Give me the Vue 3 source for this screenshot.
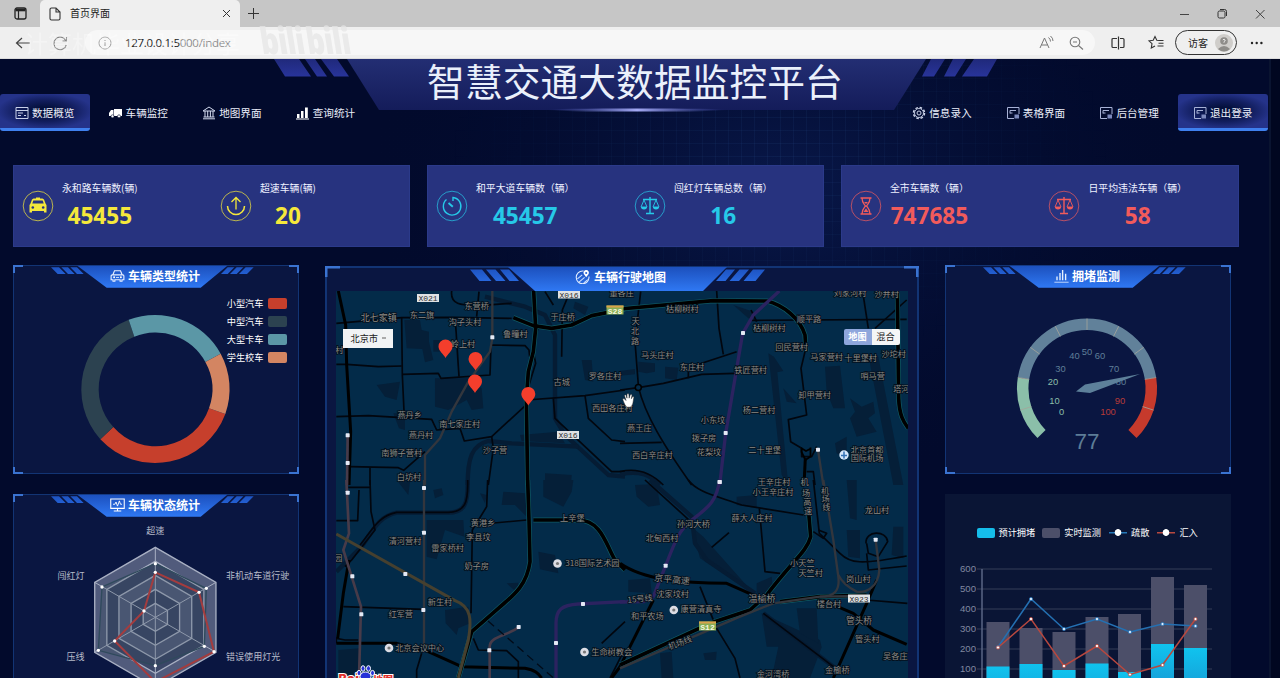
<script setup>
const glyph = {
  list: '<path d="M1 1.500h12v11H1zM1 4.500h12M3 7h5M3 9.500h3M9 9.500h2" fill="none" stroke="#c9d1ea" stroke-width="1"/>',
  truck: '<path d="M5 3h8v7H5zM0 7l2-3h2.500v6H0z" fill="#fff"/><circle cx="3.500" cy="10.300" r="1.500" fill="#fff" stroke="#020b2e" stroke-width=".6"/><circle cx="10" cy="10.300" r="1.500" fill="#fff" stroke="#020b2e" stroke-width=".6"/>',
  bank: '<path d="M1 5L7 1l6 4zM3 5v6M5.700 5v6M8.400 5v6M11 5v6M1.500 11h11M1 12.800h12" fill="none" stroke="#d3daee" stroke-width="1"/>',
  bars: '<path d="M1 8h2.500v4H1zM5 5h2.500v7H5zM9 1.500h2.800V12H9zM0 12.500h13v1H0z" fill="#fff"/>',
  gear: '<circle cx="7" cy="7" r="5.500" fill="none" stroke="#cdd5ea" stroke-width="1.500" stroke-dasharray="2.500 1.820"/><circle cx="7" cy="7" r="4.500" fill="none" stroke="#cdd5ea" stroke-width=".9"/><circle cx="7" cy="7" r="2" fill="none" stroke="#cdd5ea"/>',
  form: '<path d="M13 8V1.500H1.500v11H8M4 7.500V4.500H10M4 7H6.500" fill="none" stroke="#a7b1d6" stroke-width="1"/><path d="M8.500 8.500H13v4H8.500z" fill="#7c89bd"/>',
  car: '<path d="M4 7l2-5h8l2 5M3 7.500h14a1.500 1.500 0 0 1 1.500 1.500v5H16v2h-2.500v-2h-7v2H4v-2H1.500V9A1.500 1.500 0 0 1 3 7.500z" fill="none" stroke="#e8f0ff" stroke-width="1.500"/><circle cx="5.500" cy="10.700" r="1.300" fill="#fff"/><circle cx="14.500" cy="10.700" r="1.300" fill="#fff"/><path d="M8 11h4" stroke="#fff"/>',
  monitor: '<path d="M1 1h18v12.500H1zM10 13.500v3M5 17h10" fill="none" stroke="#fff" stroke-width="1.400"/><path d="M4 8h2.500l1.500-3 2 5.500 2.500-7L14 8h2" fill="none" stroke="#fff" stroke-width="1.200"/>',
  route: '<circle cx="9.500" cy="10" r="8" fill="none" stroke="#e4efff" stroke-width="1.300" stroke-dasharray="38 10"/><path d="M14 10l-3-4a3.400 3.400 0 1 1 6 0z" fill="#fff"/><circle cx="14" cy="4.700" r="1.300" fill="#2563d8"/><path d="M3 12l6-5M5 16l7-6M11 17l5-4" stroke="#cfe1ff" stroke-width="1.300"/>',
  graph: '<path d="M.500 17.300h19" stroke="#cfe0ff" stroke-width="1.200"/><path d="M4 14.500V9.500M8 14.500V5M11.500 14.500V1M15.500 14.500V6" stroke="#e8f2ff" stroke-width="1.800" fill="none"/>',
  taxi: '<path d="M13 6.500h4v1.200h-4zM9 8.500L10.500 7.500h9L21 8.500l1.500 4 1 1.500v7.500h-2.500V20H9v1.500H6.500V14l1-1.500z" fill="currentColor"/><path d="M10.300 9.500h9.400l1 3H9.300z" fill="#27337f"/><circle cx="9.800" cy="16.500" r="1.300" fill="#27337f"/><circle cx="20.200" cy="16.500" r="1.300" fill="#27337f"/>',
  upload: '<path d="M15 18.500V7M10.500 11L15 6.500 19.500 11" fill="none" stroke="currentColor" stroke-width="1.300"/><path d="M6.500 15a8.500 8.500 0 0 0 17 0" fill="none" stroke="currentColor" stroke-width="1.500"/>',
  timer: '<path d="M16 10V6.500a8.800 8.800 0 1 1-6.500 2" fill="none" stroke="currentColor" stroke-width="1.400"/><path d="M11.500 12l4.300 3.700" stroke="currentColor" stroke-width="1.900"/>',
  scale: '<path d="M15 6v16M11 22.500h8M8 8.500h14" fill="none" stroke="currentColor" stroke-width="1.400"/><path d="M6 16l3-7 3 7zM18 16l3-7 3 7z" fill="none" stroke="currentColor" stroke-width=".9"/><path d="M6 16a3 2.400 0 0 0 6 0zM18 16a3 2.400 0 0 0 6 0z" fill="currentColor"/>',
  hourglass: '<path d="M9.500 7h11M9.500 23h11M11 7c0 5 2 6 3.500 8-1.500 2-3.500 3-3.500 8M19 7c0 5-2 6-3.500 8 1.500 2 3.500 3 3.500 8" fill="none" stroke="currentColor" stroke-width="1.300"/><path d="M12.500 21l2.500-3.500 2.500 3.500zM13 11h4l-2 2z" fill="currentColor"/>'
}
const navLeft = [['list', '数据概览', true], ['truck', '车辆监控'], ['bank', '地图界面'], ['bars', '查询统计']]
const navRight = [['gear', '信息录入'], ['form', '表格界面'], ['form', '后台管理'], ['form', '退出登录', true]]
const stats = [
  { tone: 'yellow', items: [['taxi', '永和路车辆数(辆)', '45455'], ['upload', '超速车辆(辆)', '20']] },
  { tone: 'cyan', items: [['timer', '和平大道车辆数（辆）', '45457'], ['scale', '闯红灯车辆总数（辆）', '16']] },
  { tone: 'red', items: [['hourglass', '全市车辆数（辆）', '747685'], ['scale', '日平均违法车辆（辆）', '58']] }
]
const donutLegend = [['小型汽车', 'c1'], ['中型汽车', 'c2'], ['大型卡车', 'c3'], ['学生校车', 'c4']]

const hex = (r) => [0, 1, 2, 3, 4, 5].map(i => {
  const a = Math.PI / 3 * i - Math.PI / 2
  return `${466 + r * Math.cos(a)},${412 + r * Math.sin(a)}`
}).join(' ')
const rings = [210, 168, 126, 84, 42]

const polar = (v, r) => {
  const a = (225 - 2.7 * v) * Math.PI / 180
  return [1087 + r * Math.cos(a), 388.5 - r * Math.sin(a)]
}
const arc = (a, b) => {
  const [x1, y1] = polar(a, 64.300), [x2, y2] = polar(b, 64.300)
  return `M${x1},${y1}A64.3,64.3 0 ${b - a > 66 ? 1 : 0} 1 ${x2},${y2}`
}
const ticks = [10, 20, 30, 40, 50, 60, 70, 80, 90].map(v => [...polar(v, 58.500), ...polar(v, 70)])
const gaugeNums = [[0, 1061.500, 411.500], [10, 1054.500, 400], [20, 1053, 381.500], [30, 1060.500, 368], [40, 1074.500, 355.500], [50, 1087, 351.500], [60, 1100, 355.500], [70, 1114, 368], [80, 1121, 381.500], [90, 1120, 400], [100, 1108, 411.500]]

const bars = [[998, 622, 666.500], [1031, 628, 664], [1064, 632, 670], [1097, 617, 663.500], [1129.500, 614, 672], [1162.500, 577, 644], [1195.500, 585, 648]]
const blueLine = [[998, 647], [1031, 599], [1064, 629], [1097, 619], [1130, 632], [1162.500, 624], [1195.500, 626]]
const redLine = [[998, 647.500], [1031, 619], [1064, 666], [1097, 646], [1130, 674.500], [1162.500, 665], [1195.500, 619]]
const pts = (l) => l.map(p => p.join(',')).join(' ')

const tiles = [
  {
    x: 325, y: 285,
    blocks: ['238,105 285,105 290,135 312,140 312,170 325,225 300,232 292,192 245,190', '325,165 365,165 365,200 325,200', '330,280 430,280 470,310 475,370 440,375 425,345 370,375 330,365', '770,225 800,225 805,290 780,285', '750,50 790,65 780,90 745,70', '660,565 740,570 738,600 660,600', '585,450 700,440 720,475 590,468', '205,385 240,385 240,435 222,430', '155,300 225,290 215,345 180,335'],
    rivers: ['M480,35 L600,65 L660,90 L690,150 L690,400 L720,450 L850,570 L900,575', 'M428,600 C428,520 440,480 490,468 L560,475 L760,485'],
    roads: ['M34,115 L230,98 L380,97 L560,100', 'M230,98 L232,270 L238,400', 'M34,238 L65,238 L160,245 L230,243', 'M392,120 L402,275', 'M232,268 L340,265 L348,280 L495,270 L498,180 L600,182 L612,195 L614,215', 'M710,215 L712,75 L735,20', 'M34,395 L130,392 L320,403 L335,435 L405,430 L418,468 L500,455 L605,358', 'M605,345 L780,332 L900,315', 'M780,332 L790,400 L860,465 L900,470', 'M500,455 L505,490 L490,600', 'M75,545 L220,548 L236,556 L300,500', 'M135,548 V600', 'M640,120 L625,200 L632,235 L612,300', 'M380,18 C375,60 410,60 460,62 L560,55', 'M462,20 L455,95', 'M685,60 L660,20 M685,340 L690,400 L860,560 L900,560'],
    highways: ['M40,18 L62,120 L65,240 L77,440 L72,600'],
    express: ['M626,18 L632,130 L625,200 L610,260 L604,340 L608,600', 'M565,98 L625,122 L680,130 L740,120 L800,92 L900,72'],
    gray: ['M502,18 L502,160 L495,200 L430,290 L380,380 L345,460 L300,510 L300,600'], mauve: ['M68,450 L66,600'], purple: [], brown: [],
    stops: [[502, 157], [68, 451], [68, 534]],
    labels: [['北七家镇', 161, 99, 27], ['东二旗', 291, 90], ['东营桥', 455, 62], ['沟子头村', 420, 112], ['岭上村', 414, 178], ['鲁疃村', 571, 146], ['于庄桥', 713, 97], ['罗各庄村', 840, 273], ['古城', 710, 292], ['西田各庄村', 862, 370], ['燕丹乡', 254, 390], ['南七家庄村', 404, 417], ['燕丹村', 288, 449], ['南狮子营村', 230, 504], ['沙子营', 510, 496], ['白坊村', 252, 576], ['村', 43, 195], ['董各庄', 890, 25]]
  },
  {
    x: 620, y: 285,
    blocks: ['55,230 105,235 105,260 80,265 55,260', '135,245 175,248 170,285 135,280', '445,205 462,215 490,258 472,262 505,600 485,570', '490,310 530,355 500,350', '615,245 660,242 675,370 640,370 620,320', '690,340 725,365 760,350 765,385 745,400 770,440 710,455 690,400 705,380', '745,210 775,215 850,600 820,600', '0,258 45,252 45,268 0,272', '645,475 680,455 680,520 650,505', '340,60 400,80 410,110 385,100'],
    rivers: ['M0,568 C60,555 90,570 120,600'],
    roads: ['M62,20 L45,170 L55,300', 'M0,315 L55,308 L130,295 L245,268 L345,265', 'M55,305 C75,390 130,480 215,600', 'M0,475 L125,472', 'M205,280 L205,255 L245,235 L350,200', 'M290,18 L297,130 L310,208', 'M395,106 L860,103', 'M728,20 L745,130', 'M860,45 L765,130', 'M555,200 L543,250 L560,390 L505,404 L512,470 L545,490 L545,515 L575,515 L590,485', 'M560,560 L580,560 L585,600', 'M0,560 C60,545 100,570 130,600', 'M393,75 L410,110'],
    highways: ['M556,520 L552,600'],
    express: ['M0,72 L280,47 L440,48 C490,60 540,100 555,150 L558,200', 'M832,20 L836,340 C838,390 850,410 865,430'],
    gray: ['M594,495 L610,600'], mauve: [], purple: ['M478,18 L400,90 L368,145 L317,445 L299,600'], brown: [],
    stops: [[369, 144], [317, 444], [594, 494], [299, 591]],
    labels: [['枯柳树村', 187, 71], ['枯柳树村', 448, 129], ['顺平路', 567, 102], ['刘家河村', 690, 24], ['沙井村', 800, 27], ['马头庄村', 112, 211], ['东庄村', 216, 246], ['铁匠营村', 392, 255], ['回民营村', 515, 187], ['马家营村', 620, 215], ['十里堡村', 722, 220], ['沙坨村', 821, 206], ['哨马营', 758, 273], ['卸甲营村', 584, 329], ['塔河', 844, 311], ['杨二营村', 417, 374], ['小东坟', 279, 404], ['燕王庄', 58, 428], ['拨子房', 252, 460], ['花梨坟', 267, 500], ['二十里堡', 434, 494], ['西白辛庄村', 97, 509], ['王辛庄村', 462, 590], ['北京首都', 741, 495], ['国际机场', 741, 519], ['天', 47, 107], ['北', 45, 137], ['路', 45, 167], ['机', 554, 590]]
  },
  {
    x: 325, y: 480,
    blocks: ['325,30 350,25 355,45 330,55', '305,120 415,120 418,170 360,150 335,238 305,230', '535,35 600,40 605,110 570,75 530,75', '655,0 745,0 740,35 715,80 655,50', '640,215 690,225 700,280 645,268', '360,390 430,380 435,430 400,445 395,465 362,430', '545,310 580,308 578,340', '40,510 105,505 105,594 40,594', '215,0 255,5 250,45', '465,40 485,45 480,70'],
    rivers: ['M428,0 C430,70 420,98 370,98 L215,98 C160,110 145,150 110,200 L34,275'],
    roads: ['M428,0 C430,70 420,95 370,97 L215,97 C160,108 145,145 105,195', 'M135,0 L138,95 L150,150 L80,240 L60,260', 'M34,122 L98,122 L102,30 M70,22 L135,22', 'M488,0 L485,80 L442,150 L438,400', 'M442,135 L605,120', 'M55,380 L295,388', 'M290,520 L275,570 L275,594', 'M445,475 L460,510 L545,512 L580,545 V594', 'M34,490 L34,475 L60,480 L100,480 M900,425 L830,490', 'M900,505 L870,565 L855,594'],
    highways: ['M72,240 L55,340 L38,475', 'M34,490 L215,490 L310,515 L410,560 L600,565 C630,570 640,580 650,594', 'M900,540 L860,594'],
    express: ['M608,0 L612,120 L615,245 C605,320 560,350 520,385 L440,455 L400,594', 'M625,120 L760,120 C830,120 845,200 870,240 L900,270'],
    gray: ['M297,0 L297,510'], mauve: ['M64,0 L72,160 L55,210 L80,290 L108,380 L102,594', 'M581,442 C540,470 495,470 494,500 V594'], purple: ['M900,365 L760,372 C710,375 693,390 693,430 V594'], brown: ['M34,162 L390,362 C440,380 440,420 430,480 L400,594'],
    stops: [[68, 38], [297, 24], [297, 158], [241, 282], [82, 289], [109, 403], [295, 390], [581, 441], [493, 511], [774, 372], [693, 489]],
    labels: [['黄港乡', 474, 129], ['李县坟', 460, 172], ['清河营村', 240, 183], ['雷家桥村', 368, 205], ['奶子房', 455, 257], ['上辛堡', 742, 115], ['新生村', 345, 367], ['红军营', 227, 401], ['北京会议中心', 284, 503], ['318国际艺术园', 802, 248], ['生命树教会', 860, 515], ['园', 40, 235]]
  },
  {
    x: 620, y: 480,
    blocks: ['45,15 110,12 120,75 85,80 50,50', '25,300 90,295 95,340 25,335', '215,140 250,170 410,350 375,325 240,235', '350,50 410,45 410,85 350,75', '425,400 600,480 605,502 570,594 455,594 475,500 440,500', '680,150 720,150 720,235 685,230', '250,520 290,515 288,540 255,540', '120,520 155,515 160,594 125,594', '530,385 590,385 595,490 540,460', '820,140 850,140 850,235 815,225', '410,310 455,290 460,340 410,340', '680,0 710,0 710,120 690,115'],
    rivers: ['M90,0 L215,110 L225,190 L260,240 L405,340', 'M430,400 L640,560'],
    roads: ['M75,0 L205,118 M240,320 L290,445 L345,535 L360,594', 'M205,0 C230,35 280,45 365,75 L550,105', 'M418,85 L435,275 L480,280', 'M275,202 L327,158', 'M580,0 L598,160 L660,220 C690,250 720,255 860,228', 'M738,190 C735,150 800,150 803,185 L775,230 L745,220 L740,190', 'M740,220 L745,270 L860,258', 'M740,360 L862,370', 'M595,150 L620,160 L610,175 L580,155', 'M430,400 L640,560'],
    highways: ['M100,360 L30,500 L0,560', 'M0,250 C70,300 190,310 320,310 L410,350', 'M595,355 L700,400 L760,450 L860,493', 'M770,300 L740,370 L640,594'],
    express: ['M565,85 L572,170 C560,215 520,240 440,345 L390,390 L270,430 L0,555', 'M480,365 L600,350 L740,345'],
    gray: ['M610,0 L640,180 L655,290 C660,330 645,350 600,350 L460,370 L360,410 L0,565', 'M767,180 L778,270 C775,320 740,340 710,335 C680,320 665,305 655,285', 'M600,350 L740,348'], mauve: [], purple: ['M299,0 C290,60 270,80 215,120 C180,150 170,170 137,257 L100,350 L70,365 L0,366'], brown: [],
    stops: [[299, 6], [137, 257], [767, 179]],
    labels: [['小王辛庄村', 459, 36], ['薛大人庄村', 396, 115], ['孙河大桥', 220, 132, 25], ['北甸西村', 126, 174], ['龙山村', 771, 89], ['小天竺', 547, 250], ['天竺村', 572, 280], ['岗山村', 715, 296], ['京平高速', 156, 299, 27, 6], ['沈家坟村', 158, 341], ['15号线', 60, 356, 24.500, -6], ['康营清真寺', 243, 388], ['和平农场', 82, 407], ['温榆桥', 426, 356, 27], ['楼台村', 627, 372], ['管头桥', 717, 423, 26], ['管头村', 742, 478], ['吴各庄', 826, 527], ['金榆桥', 652, 570], ['金河湾桥', 459, 583], ['机场线', 180, 488, 24.500, -20], ['教会', 12, 515], ['场', 558, 38], ['高', 562, 66], ['速', 564, 94], ['机', 615, 32], ['场', 617, 56], ['线', 619, 80]]
  }
]
const pins = [[445.500, 358], [475.500, 370.500], [475, 393], [528.300, 405.500]]
const badges = [['X021', 428, 298], ['X016', 569, 294.500], ['X016', 568, 435], ['X023', 859, 598.500]]
const greenBadges = [['S28', 615, 310], ['S12', 707.500, 626]]
const pois = [[557.500, 563.500], [389, 648], [673.800, 610], [584.500, 652]]
</script>

<template>
  <div class="window">
    <div class="tabs">
      <svg class="workspace" width="14" height="13" viewBox="0 0 14 13"><rect x="1" y="1" width="11" height="11" rx="2" fill="none" stroke="#222" stroke-width="1.300"/><path d="M1.500 3h10" stroke="#222" stroke-width="2.600"/><path d="M4.500 4v8" stroke="#222" stroke-width="1.200"/></svg>
      <div class="tab">
        <svg width="12" height="14" viewBox="0 0 12 14"><path d="M1 2.500A1.500 1.500 0 0 1 2.500 1H7l4 4v6.500a1.500 1.500 0 0 1-1.500 1.500h-7A1.500 1.500 0 0 1 1 11.500zM7 1v4h4" fill="none" stroke="#333" stroke-width="1.100"/></svg>
        <span>首页界面</span>
        <svg class="close" width="9" height="9" viewBox="0 0 9 9"><path d="M1 1l7 7M8 1L1 8" stroke="#333"/></svg>
      </div>
      <svg class="plus" width="13" height="13" viewBox="0 0 13 13"><path d="M6.500 1v11M1 6.500h11" stroke="#333"/></svg>
      <svg class="controls" width="90" height="12" viewBox="0 0 90 12"><path d="M2 6.500h9" stroke="#444"/><rect x="40" y="3" width="7" height="7" rx="1.500" fill="none" stroke="#333"/><path d="M42 1.500h4.500a2 2 0 0 1 2 2V8" fill="none" stroke="#333"/><path d="M78 2l8.500 8.500M86.500 2L78 10.500" stroke="#444"/></svg>
    </div>
    <div class="toolbar">
      <svg class="arrows" width="70" height="20" viewBox="0 0 70 20"><path d="M30 10H17M22 5l-5.500 5 5.500 5" fill="none" stroke="#444" stroke-width="1.200"/><path d="M66 8a6.300 6.300 0 1 0 .3 4M66.500 4v4h-4" fill="none" stroke="#777" stroke-width="1.100"/></svg>
      <div class="address">
        <svg width="14" height="14" viewBox="0 0 14 14"><circle cx="7" cy="7" r="6" fill="none" stroke="#999"/><path d="M7 6v4M7 4v1" stroke="#999"/></svg>
        <span class="url">127.0.0.1:5<i>000/index</i></span>
        <svg class="zoomer" width="50" height="16" viewBox="0 0 50 16"><path d="M2 13L6.500 3 11 13M3.500 10h6M10.500 2.500q2 1.500 2 4M12.500 1q2.500 2 2.500 5" fill="none" stroke="#777"/><circle cx="37" cy="7" r="4.800" fill="none" stroke="#777" stroke-width="1.100"/><path d="M35 7h4M40.500 10.500L45 14.500" stroke="#777" stroke-width="1.100"/></svg>
      </div>
      <svg class="tools" width="60" height="16" viewBox="0 0 60 16"><path d="M10 3.500h3a1 1 0 0 1 1 1v7a1 1 0 0 1-1 1h-3M7 3.500H3a1 1 0 0 0-1 1v7a1 1 0 0 0 1 1h4M8.500 1.500v13" fill="none" stroke="#333" stroke-width="1.200"/><path d="M49 5.500l-2.200-.3L45 1.500l-1.800 3.700-4.200.6 3 2.900-.7 4.300 3.700-2M49 5.500h4.500M48.500 8.200h5M47.500 11h6" fill="none" stroke="#333" stroke-width="1.100"/></svg>
      <div class="guest"><span>访客</span><svg width="18" height="18" viewBox="0 0 18 18"><circle cx="9" cy="9" r="9" fill="#cfcdca"/><circle cx="9" cy="7" r="3.800" fill="#8e8c89"/><path d="M3 15q6-6 12 0-6 5-12 0z" fill="#8e8c89"/><path d="M7.800 6q1.400-1.800 2.400 0 0 1-1.200 1.700v1" stroke="#eee" fill="none"/></svg></div>
      <svg class="dots" width="14" height="4" viewBox="0 0 14 4"><circle cx="2" cy="2" r="1.200" fill="#222"/><circle cx="6.700" cy="2" r="1.200" fill="#222"/><circle cx="11.400" cy="2" r="1.200" fill="#222"/></svg>
    </div>

    <div class="page">
      <svg class="backdrop" width="1280" height="619" viewBox="0 59 1280 619">
        <defs>
          <pattern id="mesh" width="13" height="13" patternUnits="userSpaceOnUse"><path d="M0 .5H13M.5 0V13" stroke="#31599c" stroke-opacity=".13"/></pattern>
          <radialGradient id="meshFade"><stop offset="0" stop-color="#fff"/><stop offset="1" stop-color="#000"/></radialGradient>
          <mask id="meshMask"><ellipse cx="780" cy="150" rx="330" ry="210" fill="url(#meshFade)"/></mask>
          <radialGradient id="glow"><stop offset="0" stop-color="#0b1d55" stop-opacity=".75"/><stop offset="1" stop-color="#020a2c" stop-opacity="0"/></radialGradient>
          <linearGradient id="banner" x1="0" y1="0" x2="0" y2="1"><stop offset="0" stop-color="#232e73"/><stop offset="1" stop-color="#141c5a"/></linearGradient>
          <linearGradient id="edge"><stop offset="0" stop-color="#4a56b8" stop-opacity="0"/><stop offset=".5" stop-color="#a5aaf5"/><stop offset="1" stop-color="#4a56b8" stop-opacity="0"/></linearGradient>
          <linearGradient id="slab" x1="0" y1="0" x2="0" y2="1"><stop offset="0" stop-color="#20297b"/><stop offset="1" stop-color="#28349a"/></linearGradient>
        </defs>
        <ellipse cx="780" cy="190" rx="420" ry="300" fill="url(#glow)"/>
        <rect x="400" y="59" width="800" height="330" fill="url(#mesh)" mask="url(#meshMask)"/>
        <path d="M347 59H926L894 110H379z" fill="url(#banner)"/>
        <ellipse cx="637" cy="110" rx="90" ry="1.600" fill="url(#edge)"/>
        <path d="M274 59h25l12 17.500h-26zM305 59h10l12 17.500h-10zM321 59h16l12 17.500h-15zM931 59h14l-11 17.500h-12zM953 59h13l-11 17.500h-11zM974 59h23l-10 17.500h-25z" fill="url(#slab)"/>
        <path d="M1269 59h2v619h-2z" fill="#0a1430"/><path d="M1271 59h9v619h-9z" fill="#010720"/>
      </svg>

      <header>
        <nav><a v-for="n in navLeft" :key="n[1]" :class="{ on: n[2] }"><svg width="14" height="14" viewBox="0 0 14 14" v-html="glyph[n[0]]"></svg>{{ n[1] }}</a></nav>
        <h1>智慧交通大数据监控平台</h1>
        <nav><a v-for="n in navRight" :key="n[1]" :class="{ on: n[2] }"><svg width="14" height="14" viewBox="0 0 14 14" v-html="glyph[n[0]]"></svg>{{ n[1] }}</a></nav>
      </header>

      <section class="stats">
        <div v-for="s in stats" :key="s.tone" class="card" :class="s.tone">
          <div v-for="i in s.items" :key="i[1]" class="stat">
            <svg width="32" height="32" viewBox="-1 -1 32 32"><circle cx="15" cy="15" r="14.800" fill="none" stroke="currentColor" stroke-opacity=".7"/><g v-html="glyph[i[0]]"></g></svg>
            <div class="figure"><span>{{ i[1] }}</span><b>{{ i[2] }}</b></div>
          </div>
        </div>
      </section>

      <main>
        <div class="column">
          <section v-for="(p, k) in [['car', '车辆类型统计'], ['monitor', '车辆状态统计']]" :key="p[1]" class="panel">
            <svg class="ribbon" width="286" height="24" viewBox="0 0 858 72"><defs><linearGradient id="rib" x1="0" y1="0" x2="0" y2="1"><stop offset="0" stop-color="#1c50bd"/><stop offset="1" stop-color="#2f78f3"/></linearGradient></defs><path d="M193 2H643L563 68H281zM114 7h24l20 20h-24zM145 7h20l20 20h-20zM172 7h20l20 20h-20zM722 7h-24l-20 20h24zM691 7h-20l-20 20h20zM664 7h-20l-20 20h20z" fill="url(#rib)"/></svg>
            <i class="corners"></i>
            <h2><svg width="15" height="14" viewBox="0 0 20 18" v-html="glyph[p[0]]"></svg>{{ p[1] }}</h2>
            <template v-if="k === 0">
              <svg class="chart" width="286" height="209" viewBox="40 14 858 627">
                <path d="M677 461A225 225 0 0 1 302 537L341 500A169 169 0 0 0 628 444z" fill="#c63f2c"/>
                <path d="M302 537A225 225 0 0 1 387 178L404 229A169 169 0 0 0 341 500z" fill="#2c4250"/>
                <path d="M387 178A225 225 0 0 1 663 280L617 305A169 169 0 0 0 404 229z" fill="#5b97a6"/>
                <path d="M663 280A225 225 0 0 1 677 461L628 444A169 169 0 0 0 617 305z" fill="#d38562"/>
              </svg>
              <ul class="legend"><li v-for="l in donutLegend" :key="l[0]">{{ l[0] }}<i :class="l[1]"></i></li></ul>
            </template>
            <svg v-else class="chart" width="286" height="209" viewBox="39 42 858 627">
              <polygon v-for="(r, n) in rings" :key="r" :points="hex(r)" :fill="n % 2 ? '#3a4667' : '#515b7c'" stroke="#a9b0c3" stroke-width="4"/>
              <path d="M466 202V622M284 307L648 517M648 307L284 517" stroke="#a9b0c3" stroke-width="3"/>
              <polygon points="466,251 619,325 613,499 466,557 295,511 306,321" fill="#2f4554" fill-opacity=".22" stroke="#2f4a5c" stroke-width="4"/>
              <polygon points="466,277 597,337 642,515 466,606 344,483 432,393" fill="none" stroke="#a43c3e" stroke-width="6"/>
              <circle v-for="d in [[466,251],[619,325],[613,499],[466,557],[295,511],[306,321],[466,277],[597,337],[642,515],[344,483],[432,393]]" :key="d.join()" :cx="d[0]" :cy="d[1]" r="5" fill="#fff"/>
              <g class="axis"><text x="466" y="162" text-anchor="middle">超速</text><text x="678" y="298">非机动车道行驶</text><text x="678" y="541">错误使用灯光</text><text x="254" y="298" text-anchor="end">闯红灯</text><text x="254" y="541" text-anchor="end">压线</text></g>
            </svg>
          </section>
        </div>

        <section class="panel wide">
          <svg class="ribbon" width="593" height="26" viewBox="325 266 593 26"><path d="M508 267H727L703 291H535zM470 269.500h12l9.500 11.500h-12zM486 269.500h9.500l10 11.500h-9.500zM500 269.500h9l10 11.500h-9.500zM765 269.500h-12l-9.500 11.500h12zM749 269.500h-9.500l-10 11.500h9.500zM735 269.500h-9l-10 11.500h9.500z" fill="url(#rib)"/></svg>
          <i class="corners"></i>
          <h2><svg width="16" height="15" viewBox="0 0 20 18" v-html="glyph.route"></svg>车辆行驶地图</h2>
          <div class="map">
            <svg width="572" height="387" viewBox="336 291 572 387">
              <g v-for="t in tiles" :key="t.x + '-' + t.y" :transform="`translate(${t.x} ${t.y}) scale(.33333)`" fill="none" stroke-linejoin="round">
                <polygon v-for="b in t.blocks" :key="b" :points="b" fill="#051f38"/>
                <path v-for="d in t.rivers" :key="d" :d="d" stroke="#051c34" stroke-width="13"/>
                <path v-for="d in t.roads" :key="d" :d="d" stroke="#02060e" stroke-width="5"/>
                <path v-for="d in t.highways" :key="d" :d="d" stroke="#000" stroke-width="9"/>
                <path v-for="d in t.express" :key="'o' + d" :d="d" stroke="#0f5a65" stroke-width="15"/>
                <path v-for="d in t.express" :key="d" :d="d" stroke="#000" stroke-width="11"/>
                <path v-for="d in t.gray" :key="d" :d="d" stroke="#33363d" stroke-width="7"/>
                <path v-for="d in t.mauve" :key="d" :d="d" stroke="#473b49" stroke-width="8"/>
                <path v-for="d in t.purple" :key="d" :d="d" stroke="#2c2360" stroke-width="10"/>
                <path v-for="d in t.brown" :key="d" :d="d" stroke="#46402f" stroke-width="9"/>
              </g>
              <path d="M488 621l69 60" stroke="#020b18" stroke-width="1.300" stroke-dasharray="8 5"/>
              <circle cx="638.300" cy="387.500" r="3" fill="#032b49" stroke="#000" stroke-width="1.500"/>
              <path d="M801.500 448v4l4 8 5-3.500v-9M801 448l5 3 4-2" fill="none" stroke="#000" stroke-width="1.800"/>
              <g v-for="t in tiles" :key="'l' + t.x + '-' + t.y" :transform="`translate(${t.x} ${t.y}) scale(.33333)`">
                <rect v-for="s in t.stops" :key="s.join()" :x="s[0] - 6" :y="s[1] - 6" width="12" height="12" rx="2" fill="#e4e9f5"/>
                <text v-for="l in t.labels" :key="l.join()" class="place" :x="l[1]" :y="l[2] + 9" :font-size="l[3] || 24.500" :transform="l[4] ? `rotate(${l[4]} ${l[1]} ${l[2]})` : null">{{ l[0] }}</text>
              </g>
              <g v-for="b in badges" :key="b.join()"><rect :x="b[1] - 11" :y="b[2] - 4" width="22" height="8" fill="#dfe2e4"/><text class="code" :x="b[1]" :y="b[2] + 3">{{ b[0] }}</text></g>
              <g v-for="b in greenBadges" :key="b.join()"><rect :x="b[1] - 8.500" :y="b[2] - 4.500" width="17" height="9" fill="#88ad55"/><rect :x="b[1] - 8.500" :y="b[2] - 4.500" width="17" height="2" fill="#d9a24c"/><text class="code pale" :x="b[1]" :y="b[2] + 3.700">{{ b[0] }}</text></g>
              <g v-for="p in pois" :key="p.join()"><circle :cx="p[0]" :cy="p[1]" r="4.300" fill="#dcdde4"/><circle :cx="p[0]" :cy="p[1]" r="1.600" fill="#777"/></g>
              <circle cx="844" cy="455" r="4.700" fill="#d6e7fb"/><path d="M844 451.500v7M841 455.500h6" stroke="#3472b5" stroke-width="1.500"/>
              <path v-for="p in pins" :key="p.join()" :d="`M${p[0]} ${p[1]}c-2-4-7-7-7-11.500a7 7 0 0 1 14 0c0 4.500-5 7.500-7 11.500z`" fill="#f43e2c"/>
              <path d="M623 400q-1-2 1-1.500l2 2-1.500-5q.5-1.500 1.600-.3l.9 3v-4q1-1.500 1.900 0l.2 4 1.200-3.500q1-1.200 1.700.2l-.6 3.800 1-2q1.300-.8 1.500.5l-1 6q-1 4-3 4h-3q-2-1.500-4-7.200z" fill="#fff" stroke="#222" stroke-width=".5"/>
              <g class="brand"><text x="338" y="684">Bai</text><text x="373" y="684" font-size="10">地图</text></g>
              <g fill="#2732d8" stroke="#fff" stroke-width="1"><ellipse cx="365.500" cy="676.500" rx="5.500" ry="4.500"/><ellipse cx="359" cy="673" rx="2" ry="2.600"/><ellipse cx="363" cy="668.500" rx="2" ry="2.800"/><ellipse cx="368.500" cy="668.500" rx="2" ry="2.800"/><ellipse cx="372.500" cy="673" rx="2" ry="2.600"/></g>
            </svg>
            <div class="city">北京市<i></i></div>
            <div class="switch"><b>地图</b><span>混合</span></div>
          </div>
        </section>

        <div class="column">
          <section class="panel">
            <svg class="ribbon" width="286" height="24" viewBox="0 0 858 72"><path d="M193 2H643L563 68H281zM114 7h24l20 20h-24zM145 7h20l20 20h-20zM172 7h20l20 20h-20zM722 7h-24l-20 20h24zM691 7h-20l-20 20h20zM664 7h-20l-20 20h20z" fill="url(#rib)"/></svg>
            <i class="corners"></i>
            <h2><svg width="15" height="14" viewBox="0 0 20 18" v-html="glyph.graph"></svg>拥堵监测</h2>
            <svg class="chart" width="286" height="209" viewBox="945 265 286 209">
              <g fill="none" stroke-width="11.500"><path :d="arc(0, 20)" stroke="#8bbfa9"/><path :d="arc(20, 80)" stroke="#61819a"/><path :d="arc(80, 100)" stroke="#c63a2c"/></g>
              <line v-for="t in ticks" :key="t[0]" :x1="t[0]" :y1="t[1]" :x2="t[2]" :y2="t[3]" stroke="#a6a59b" stroke-width=".8"/>
              <g class="gauge"><text v-for="g in gaugeNums" :key="g[0]" :x="g[1]" :y="g[2] + 3.500" :fill="g[0] > 80 ? '#b83b38' : g[0] <= 20 ? '#8bbfa9' : '#5f7f98'">{{ g[0] }}</text></g>
              <path d="M1140 374L1085 384.500 1076 391.500 1090 393z" fill="#5d809a"/>
              <text class="score" x="1087" y="448.500">77</text>
            </svg>
          </section>
          <section class="plot">
            <div class="keys"><i class="fill cy"></i>预计拥堵<i class="fill gr"></i>实时监测<i class="dot bl"></i>疏散<i class="dot rd"></i>汇入</div>
            <svg class="chart" width="286" height="184" viewBox="945 494 286 184">
              <defs><linearGradient id="aqua" x1="0" y1="0" x2="0" y2="1"><stop offset="0" stop-color="#10c3ee"/><stop offset="1" stop-color="#169fd8"/></linearGradient></defs>
              <path v-for="n in 6" :key="n" :d="`M977 ${549 + n * 20}H1212`" stroke="#353e58"/>
              <text v-for="n in 6" :key="'t' + n" class="tick" x="976" :y="552 + n * 20">{{ 700 - n * 100 }}</text>
              <g v-for="b in bars" :key="b[0]"><rect :x="b[0] - 11.500" :y="b[1]" width="23" height="100" fill="#4c4f69"/><rect :x="b[0] - 11.500" :y="b[2]" width="23" height="40" fill="url(#aqua)"/></g>
              <path d="M982 569v120" stroke="#5f6b8a" stroke-width="1.400"/>
              <polyline :points="pts(blueLine)" fill="none" stroke="#2470b2" stroke-width="1.500"/><polyline :points="pts(redLine)" fill="none" stroke="#b7483f" stroke-width="1.500"/>
              <circle v-for="p in blueLine" :key="'b' + p[0]" :cx="p[0]" :cy="p[1]" r="1.600" fill="#dfeeff" stroke="#2470b2" stroke-width=".8"/>
              <circle v-for="p in redLine" :key="'r' + p[0]" :cx="p[0]" :cy="p[1]" r="1.600" fill="#fff" stroke="#b7483f" stroke-width=".8"/>
            </svg>
          </section>
        </div>
      </main>
    </div>
    <div class="mark"><span>计算机毕业设计分享</span><b>bili</b><b>bili</b></div>
  </div>
</template>

<style>
html, body { margin: 0; overflow: hidden; background: #020a2c; }
</style>
<style scoped>
* { box-sizing: border-box; }
i { font-style: normal; }
.window { position: relative; width: 1280px; height: 678px; overflow: hidden; font-family: "Noto Sans CJK SC", sans-serif; color: #fff; display: flex; flex-direction: column; }
.tabs { height: 27px; flex: none; background: #c6c6c6; display: flex; align-items: center; }
.workspace { margin-left: 14px; }
.tab { width: 200px; height: 27px; margin-left: 12px; background: #efefef; border-radius: 5px 5px 0 0; display: flex; align-items: center; padding: 0 9px; color: #222; font-size: 10px; }
.tab span { margin-left: 9px; position: relative; top: -1px; }
.close { margin-left: auto; }
.plus { margin-left: 7px; }
.controls { margin-left: auto; margin-right: 12px; }
.toolbar { height: 32px; flex: none; background: #efefef; display: flex; align-items: center; color: #222; border-bottom: 1px solid #dcdcdc; }
.arrows { margin-right: 15px; }
.address { width: 1010px; height: 25px; border-radius: 13px; background: #f7f7f7; display: flex; align-items: center; padding-left: 13px; }
.url { margin-left: 13px; font: 11.500px "Open Sans", sans-serif; color: #222; letter-spacing: -.3px; }
.url i { color: #8b8b8b; }
.zoomer { margin-left: auto; margin-right: 7px; }
.tools { margin-left: 15px; }
.guest { width: 62px; height: 25px; margin-left: 5px; border: 1.200px solid #333; border-radius: 13px; display: flex; align-items: center; justify-content: space-between; padding: 0 3px 0 12px; font-size: 10px; }
.dots { margin-left: 13px; }
.page { position: relative; flex: 1; background: #020a2c; overflow: hidden; }
.backdrop { position: absolute; inset: 0; }
header { position: relative; height: 106px; width: 1268px; display: flex; justify-content: space-between; }
nav { display: flex; gap: 3.600px; padding-top: 35px; }
nav a { width: 90px; height: 37px; display: flex; align-items: center; padding-left: 15px; gap: 3px; font-size: 10.600px; white-space: nowrap; color: #eaeef9; }
nav a.on { border-radius: 3px; background: radial-gradient(ellipse at center, #04103c 15%, #121e5e 45%, #25338a 75%); border-bottom: 3px solid #3f80ee; padding-top: 3px; }
h1 { margin: 0; position: relative; left: 1px; top: -1.500px; height: 50px; font-size: 37.800px; font-weight: 400; line-height: 44px; color: #eaf0fb; white-space: nowrap; }
.stats { position: relative; display: grid; grid-template-columns: 397px 397px 398px; gap: 17px; padding-left: 12.500px; height: 81.500px; }
.card { background: #27337f; border: 1px solid #2b3a8a; display: flex; }
.stat { flex: 1; display: flex; align-items: center; padding-left: 8px; }
.stat + .stat { padding-left: 9px; }
.figure { margin-left: 8.500px; display: flex; flex-direction: column; align-items: center; height: 79.500px; padding-top: 15px; }
.figure span { color: #eef1ff; font-size: 9.850px; line-height: 15px; white-space: nowrap; }
.figure b { font: bold 22.600px/26px "Open Sans", sans-serif; margin-top: 7px; }
.yellow { color: #f5e83b; } .cyan { color: #26c9e8; } .red { color: #f25b5b; }
main { position: relative; display: grid; grid-template-columns: 286px 594px 286px; gap: 26px; padding: 18.500px 0 0 12.500px; }
.column { display: flex; flex-direction: column; gap: 20px; }
.panel { position: relative; height: 209px; background: #0a1641; border: 1px solid #123474; }
.panel.wide { height: 440px; margin-top: 1px; border-width: 2px; }
.ribbon, .chart { position: absolute; left: -1px; top: -1px; }
.wide .ribbon { left: -2px; top: -2px; }
.corners { position: absolute; inset: -1px; background: linear-gradient(#3a73d1, #3a73d1) 0 0 / 10px 2px, linear-gradient(#3a73d1, #3a73d1) 0 0 / 2px 8px, linear-gradient(#3a73d1, #3a73d1) 100% 0 / 10px 2px, linear-gradient(#3a73d1, #3a73d1) 100% 0 / 2px 8px, linear-gradient(#3a73d1, #3a73d1) 0 100% / 10px 2px, linear-gradient(#3a73d1, #3a73d1) 0 100% / 2px 7px, linear-gradient(#3a73d1, #3a73d1) 100% 100% / 10px 2px, linear-gradient(#3a73d1, #3a73d1) 100% 100% / 2px 7px; background-repeat: no-repeat; }
.wide .corners { inset: -2px; background-size: 15px 2.500px, 2.500px 11px, 15px 2.500px, 2.500px 11px, 0 0, 0 0, 0 0, 0 0; }
h2 { position: relative; margin: -1px 0 0; height: 21px; display: flex; align-items: center; justify-content: center; gap: 3px; font-size: 12px; line-height: 17px; font-weight: 700; padding-right: 1px; z-index: 1; }
.wide h2 { margin-top: -2px; height: 21px; padding: 0 2px 0 0; }
.legend { position: relative; list-style: none; margin: 8px 11px 0 0; padding: 0; font-size: 9.200px; }
.legend li { height: 18px; display: flex; justify-content: flex-end; align-items: center; gap: 4px; }
.legend i { width: 19px; height: 11px; border-radius: 2px; }
.c1 { background: #c63f2c; } .c2 { background: #2c4250; } .c3 { background: #5b97a6; } .c4 { background: #d38562; }
.axis { font-size: 27.200px; fill: #b7bbc9; }
.map { position: relative; width: 572px; height: 387px; margin: 4px 0 0 9px; background: #032b49; overflow: hidden; }
.map > svg { display: block; }
.place { text-anchor: middle; fill: #8b8984; stroke: #03101d; stroke-width: 5px; paint-order: stroke; }
.code { font: 8px "Liberation Mono", monospace; text-anchor: middle; fill: #333; }
.code.pale { fill: #f5f7df; font-weight: bold; }
.brand { font-weight: 900; font-size: 13px; fill: #e2302a; stroke: #fff; stroke-width: 2px; paint-order: stroke; }
.city { position: absolute; left: 7px; top: 37.500px; width: 50px; height: 19px; background: #f1f3f4; color: #222; font-size: 9.200px; display: flex; align-items: center; padding-left: 8px; }
.city i { width: 4px; height: 2px; margin-left: 4px; background: #aaa; }
.switch { position: absolute; left: 508px; top: 38px; height: 15.500px; display: flex; font-size: 9.200px; border-radius: 2px; overflow: hidden; color: #222; line-height: 15px; text-align: center; }
.switch b { width: 28px; background: #8ea6dc; color: #fff; } .switch span { width: 28px; background: #f5f6f7; }
.gauge { font: 9.400px "Liberation Sans", sans-serif; text-anchor: middle; }
.score { font: 22.500px "Liberation Sans", sans-serif; fill: #5d7d97; text-anchor: middle; }
.plot { position: relative; height: 184px; background: #0a1535; }
.plot .chart { left: 0; top: 0; }
.keys { position: relative; z-index: 1; display: flex; align-items: center; font-size: 9.200px; padding: 32px 0 0 32px; line-height: 13px; white-space: nowrap; }
.fill { width: 18px; height: 10px; border-radius: 2px; margin-right: 4px; }
.cy { background: #15bdea; } .gr { background: #4c4f69; margin-left: 7px; }
.dot { width: 18px; height: 9px; margin: 0 4px 0 8px; background: radial-gradient(circle, #fff 3px, transparent 3.700px), linear-gradient(currentColor, currentColor) 0 50% / 100% 1.500px no-repeat; }
.bl { color: #2478b8; } .rd { color: #b7483f; }
.tick { font: 9.600px "Liberation Sans", sans-serif; text-anchor: end; fill: #8088a0; }
.mark { position: absolute; left: 24px; top: 20px; display: flex; align-items: center; height: 44px; color: #fff; opacity: .75; pointer-events: none; }
.mark span { font-size: 24px; width: 236px; white-space: nowrap; opacity: .4; }
.mark b { font: 900 37px/44px "Noto Sans", sans-serif; color: #e6e6e6; letter-spacing: -1px; transform: skewX(9deg) scaleX(.78); transform-origin: left; width: 46px; position: relative; top: -2px; }
</style>
